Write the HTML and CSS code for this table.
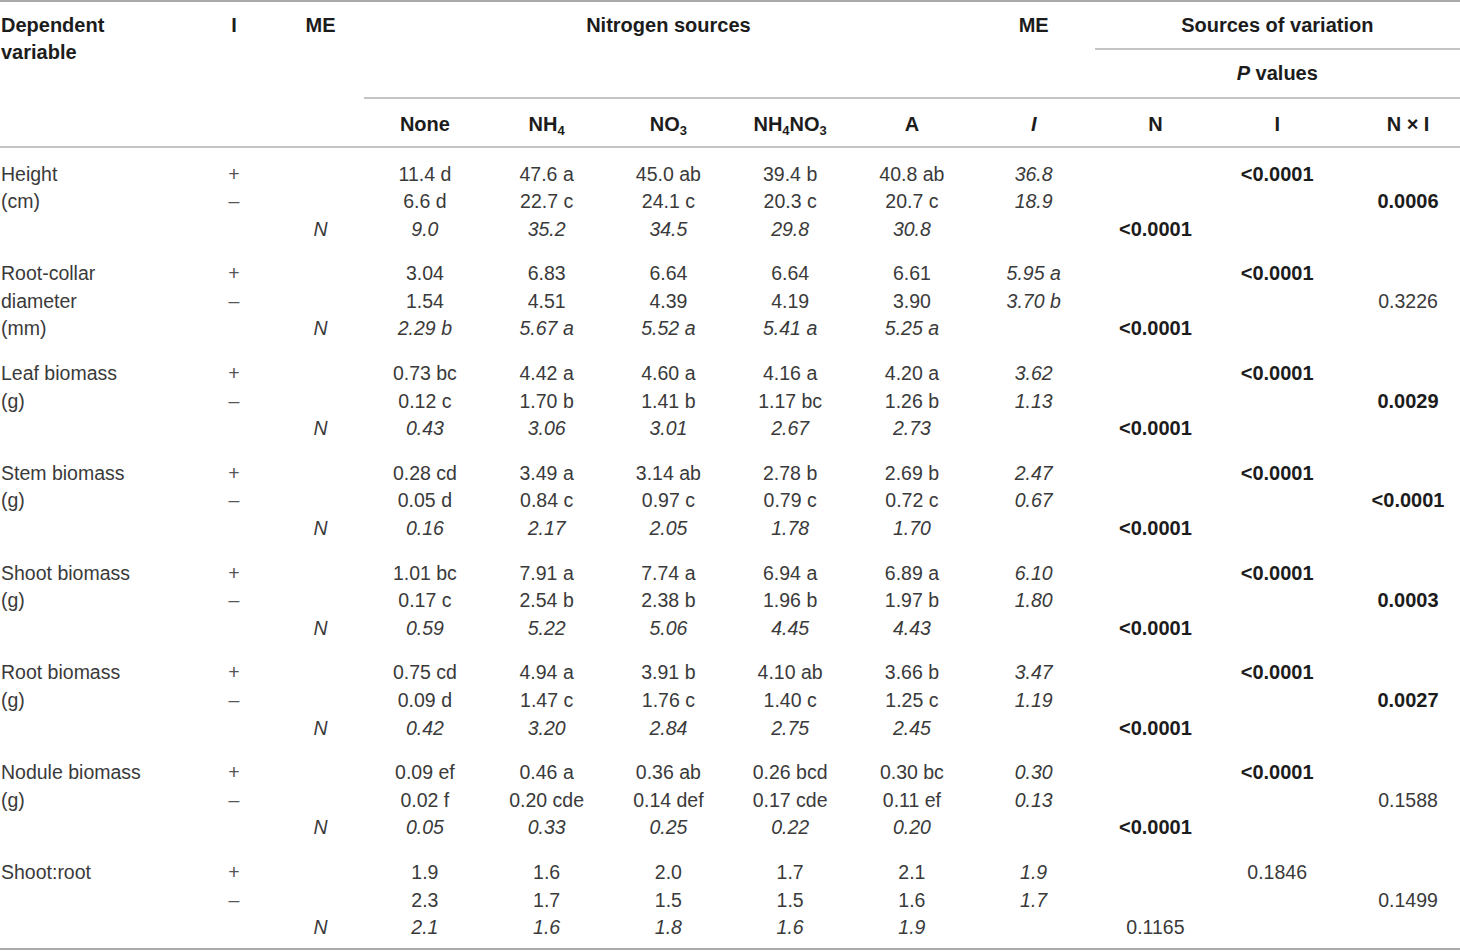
FILE: index.html
```html
<!DOCTYPE html>
<html lang="en">
<head>
<meta charset="utf-8">
<title>Table</title>
<link rel="stylesheet" href="styles.css">
</head>
<body>
<table class="tbl">
  <colgroup>
    <col class="w-dep"><col class="w-i"><col class="w-me">
    <col class="w-n"><col class="w-n"><col class="w-n"><col class="w-n"><col class="w-n"><col class="w-n"><col class="w-n"><col class="w-n">
    <col class="w-last">
  </colgroup>
  <thead>
    <tr class="r1">
      <th rowspan="3" class="top left rule">Dependent<br>variable</th>
      <th rowspan="3" class="top rule">I</th>
      <th rowspan="3" class="top rule">ME</th>
      <th rowspan="2" colspan="5" class="top rule">Nitrogen sources</th>
      <th rowspan="2" class="top rule">ME</th>
      <th colspan="3" class="rule shift">Sources of variation</th>
    </tr>
    <tr class="r2">
      <th colspan="3" class="rule shift"><i>P</i> values</th>
    </tr>
    <tr class="r3">
      <th class="rule low">None</th>
      <th class="rule low">NH<sub>4</sub></th>
      <th class="rule low">NO<sub>3</sub></th>
      <th class="rule low">NH<sub>4</sub>NO<sub>3</sub></th>
      <th class="rule low">A</th>
      <th class="rule low"><i>I</i></th>
      <th class="rule low">N</th>
      <th class="rule low">I</th>
      <th class="rule low last">N × I</th>
    </tr>
  </thead>
  <tbody>
    <tr class="gs g0"><td class="lab">Height</td><td class="sg">+</td><td></td><td>11.4 d</td><td>47.6 a</td><td>45.0 ab</td><td>39.4 b</td><td>40.8 ab</td><td class="it">36.8</td><td></td><td class="b">&lt;0.0001</td><td class="last"></td></tr>
    <tr><td class="lab">(cm)</td><td class="sg">–</td><td></td><td>6.6 d</td><td>22.7 c</td><td>24.1 c</td><td>20.3 c</td><td>20.7 c</td><td class="it">18.9</td><td></td><td></td><td class="last b">0.0006</td></tr>
    <tr class="ge"><td class="lab"></td><td></td><td class="it">N</td><td class="it">9.0</td><td class="it">35.2</td><td class="it">34.5</td><td class="it">29.8</td><td class="it">30.8</td><td></td><td class="b">&lt;0.0001</td><td></td><td class="last"></td></tr>

    <tr class="gs"><td class="lab">Root-collar</td><td class="sg">+</td><td></td><td>3.04</td><td>6.83</td><td>6.64</td><td>6.64</td><td>6.61</td><td class="it">5.95 a</td><td></td><td class="b">&lt;0.0001</td><td class="last"></td></tr>
    <tr><td class="lab">diameter</td><td class="sg">–</td><td></td><td>1.54</td><td>4.51</td><td>4.39</td><td>4.19</td><td>3.90</td><td class="it">3.70 b</td><td></td><td></td><td class="last">0.3226</td></tr>
    <tr class="ge"><td class="lab">(mm)</td><td></td><td class="it">N</td><td class="it">2.29 b</td><td class="it">5.67 a</td><td class="it">5.52 a</td><td class="it">5.41 a</td><td class="it">5.25 a</td><td></td><td class="b">&lt;0.0001</td><td></td><td class="last"></td></tr>

    <tr class="gs"><td class="lab">Leaf biomass</td><td class="sg">+</td><td></td><td>0.73 bc</td><td>4.42 a</td><td>4.60 a</td><td>4.16 a</td><td>4.20 a</td><td class="it">3.62</td><td></td><td class="b">&lt;0.0001</td><td class="last"></td></tr>
    <tr><td class="lab">(g)</td><td class="sg">–</td><td></td><td>0.12 c</td><td>1.70 b</td><td>1.41 b</td><td>1.17 bc</td><td>1.26 b</td><td class="it">1.13</td><td></td><td></td><td class="last b">0.0029</td></tr>
    <tr class="ge"><td class="lab"></td><td></td><td class="it">N</td><td class="it">0.43</td><td class="it">3.06</td><td class="it">3.01</td><td class="it">2.67</td><td class="it">2.73</td><td></td><td class="b">&lt;0.0001</td><td></td><td class="last"></td></tr>

    <tr class="gs"><td class="lab">Stem biomass</td><td class="sg">+</td><td></td><td>0.28 cd</td><td>3.49 a</td><td>3.14 ab</td><td>2.78 b</td><td>2.69 b</td><td class="it">2.47</td><td></td><td class="b">&lt;0.0001</td><td class="last"></td></tr>
    <tr><td class="lab">(g)</td><td class="sg">–</td><td></td><td>0.05 d</td><td>0.84 c</td><td>0.97 c</td><td>0.79 c</td><td>0.72 c</td><td class="it">0.67</td><td></td><td></td><td class="last b">&lt;0.0001</td></tr>
    <tr class="ge"><td class="lab"></td><td></td><td class="it">N</td><td class="it">0.16</td><td class="it">2.17</td><td class="it">2.05</td><td class="it">1.78</td><td class="it">1.70</td><td></td><td class="b">&lt;0.0001</td><td></td><td class="last"></td></tr>

    <tr class="gs"><td class="lab">Shoot biomass</td><td class="sg">+</td><td></td><td>1.01 bc</td><td>7.91 a</td><td>7.74 a</td><td>6.94 a</td><td>6.89 a</td><td class="it">6.10</td><td></td><td class="b">&lt;0.0001</td><td class="last"></td></tr>
    <tr><td class="lab">(g)</td><td class="sg">–</td><td></td><td>0.17 c</td><td>2.54 b</td><td>2.38 b</td><td>1.96 b</td><td>1.97 b</td><td class="it">1.80</td><td></td><td></td><td class="last b">0.0003</td></tr>
    <tr class="ge"><td class="lab"></td><td></td><td class="it">N</td><td class="it">0.59</td><td class="it">5.22</td><td class="it">5.06</td><td class="it">4.45</td><td class="it">4.43</td><td></td><td class="b">&lt;0.0001</td><td></td><td class="last"></td></tr>

    <tr class="gs"><td class="lab">Root biomass</td><td class="sg">+</td><td></td><td>0.75 cd</td><td>4.94 a</td><td>3.91 b</td><td>4.10 ab</td><td>3.66 b</td><td class="it">3.47</td><td></td><td class="b">&lt;0.0001</td><td class="last"></td></tr>
    <tr><td class="lab">(g)</td><td class="sg">–</td><td></td><td>0.09 d</td><td>1.47 c</td><td>1.76 c</td><td>1.40 c</td><td>1.25 c</td><td class="it">1.19</td><td></td><td></td><td class="last b">0.0027</td></tr>
    <tr class="ge"><td class="lab"></td><td></td><td class="it">N</td><td class="it">0.42</td><td class="it">3.20</td><td class="it">2.84</td><td class="it">2.75</td><td class="it">2.45</td><td></td><td class="b">&lt;0.0001</td><td></td><td class="last"></td></tr>

    <tr class="gs"><td class="lab">Nodule biomass</td><td class="sg">+</td><td></td><td>0.09 ef</td><td>0.46 a</td><td>0.36 ab</td><td>0.26 bcd</td><td>0.30 bc</td><td class="it">0.30</td><td></td><td class="b">&lt;0.0001</td><td class="last"></td></tr>
    <tr><td class="lab">(g)</td><td class="sg">–</td><td></td><td>0.02 f</td><td>0.20 cde</td><td>0.14 def</td><td>0.17 cde</td><td>0.11 ef</td><td class="it">0.13</td><td></td><td></td><td class="last">0.1588</td></tr>
    <tr class="ge"><td class="lab"></td><td></td><td class="it">N</td><td class="it">0.05</td><td class="it">0.33</td><td class="it">0.25</td><td class="it">0.22</td><td class="it">0.20</td><td></td><td class="b">&lt;0.0001</td><td></td><td class="last"></td></tr>

    <tr class="gs"><td class="lab">Shoot:root</td><td class="sg">+</td><td></td><td>1.9</td><td>1.6</td><td>2.0</td><td>1.7</td><td>2.1</td><td class="it">1.9</td><td></td><td>0.1846</td><td class="last"></td></tr>
    <tr><td class="lab"></td><td class="sg">–</td><td></td><td>2.3</td><td>1.7</td><td>1.5</td><td>1.5</td><td>1.6</td><td class="it">1.7</td><td></td><td></td><td class="last">0.1499</td></tr>
    <tr class="ge gz"><td class="lab"></td><td></td><td class="it">N</td><td class="it">2.1</td><td class="it">1.6</td><td class="it">1.8</td><td class="it">1.6</td><td class="it">1.9</td><td></td><td>0.1165</td><td></td><td class="last"></td></tr>
  </tbody>
</table>
</body>
</html>
```

FILE: styles.css
```css
html, body {
  margin: 0;
  padding: 0;
  background: #ffffff;
  overflow: hidden;
}

.tbl {
  width: 1460px;
  table-layout: fixed;
  border-collapse: separate;
  border-spacing: 0;
  font-family: "Liberation Sans", Arial, sans-serif;
  font-size: 19.5px;
  color: #3a3a3a;
  border-top: 2px solid #a9a9a9;
  border-bottom: 2px solid #a9a9a9;
}

.w-dep { width: 191px; }
.w-i { width: 86px; }
.w-me { width: 87px; }
.w-n { width: 121.75px; }
.w-last { width: 122px; }

th {
  font-weight: bold;
  font-size: 20px;
  color: #1c1c1c;
  line-height: 27px;
  padding: 0;
  text-align: center;
  vertical-align: middle;
}

th sub {
  font-size: 13px;
  line-height: 0;
  vertical-align: -4px;
}

th.top {
  vertical-align: top;
  padding-top: 10px;
}

th.left {
  text-align: left;
  padding-left: 1px;
}

th.rule {
  border-bottom: 2px solid #c4c4c4;
}

th.low {
  padding-top: 3px;
}

tr.r1 { height: 48px; }
tr.r2 { height: 49px; }
tr.r3 { height: 49px; }

td {
  padding: 0;
  line-height: 27.6px;
  text-align: center;
  vertical-align: middle;
  white-space: nowrap;
}

td.lab {
  text-align: left;
  padding-left: 1px;
}

td.sg {
  color: #555555;
}

th.last,
td.last {
  padding-left: 18px;
}

.it {
  font-style: italic;
}

.b {
  font-weight: bold;
  font-size: 20px;
  color: #1c1c1c;
}

tr.gs td {
  padding-top: 8.5px;
}

tr.g0 td {
  padding-top: 12.5px;
}

tr.ge td {
  padding-bottom: 8.5px;
}

tr.gz td {
  padding-bottom: 6px;
}
```
